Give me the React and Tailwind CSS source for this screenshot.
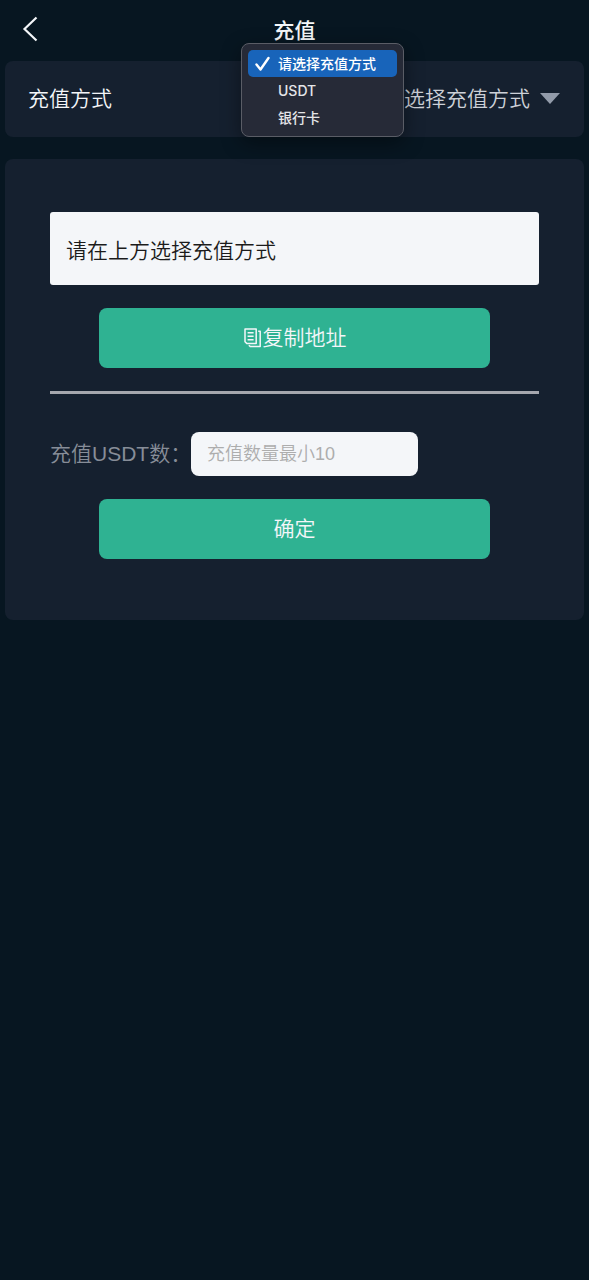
import { useState } from "react";

const METHODS = [
  { value: "", label: "请选择充值方式" },
  { value: "usdt", label: "USDT" },
  { value: "bank", label: "银行卡" },
];

export default function App() {
  const [method, setMethod] = useState("");
  const [menuOpen, setMenuOpen] = useState(true);
  const [amount, setAmount] = useState("");

  const pickMethod = (value) => {
    setMethod(value);
    setMenuOpen(false);
  };

  return (
    <div lang="zh-CN" className="min-h-screen bg-[#071621] px-[5px] font-['Liberation_Sans','Noto_Sans_CJK_SC',sans-serif] text-[21px] font-[350] text-[#f4f6f9]">
      <header className="grid h-[61px] grid-cols-[1fr_auto_1fr] items-center">
        <button type="button" aria-label="返回" className="ml-4 w-5 pb-1">
          <svg viewBox="0 0 20 26" className="h-[26px] w-5" fill="none" stroke="currentColor" strokeWidth="2.2">
            <path d="M15.5 1.5 3.5 13l12 11.5" />
          </svg>
        </button>
        <h1 className="leading-[61px] font-medium">充值</h1>
      </header>

      {/* 充值方式 */}
      <section className="relative flex h-[76px] items-center justify-between rounded-lg bg-[#15202f] pr-6 pl-[23px]">
        <label htmlFor="method">充值方式</label>
        <div className="flex items-center gap-[10px]">
          <select
            id="method"
            value={method}
            onChange={(e) => setMethod(e.target.value)}
            className="appearance-none bg-transparent text-[#cdd1d8] outline-none"
          >
            {METHODS.map((item) => (
              <option key={item.value} value={item.value}>
                {item.label}
              </option>
            ))}
          </select>
          <svg viewBox="0 0 20 11" className="mb-[2px] h-[11px] w-5 text-[#929baa]" fill="currentColor">
            <path d="M0 0h20L10 11z" />
          </svg>
        </div>

        {menuOpen && (
          <ul
            role="listbox"
            aria-label="充值方式"
            className="absolute -top-[18px] right-[180px] w-[163px] rounded-lg border border-[#5a5d66] bg-[#262a37] px-[6px] pt-[6px] pb-[5px] font-['Inter','Noto_Sans_CJK_SC',sans-serif] text-sm font-medium shadow-[0_6px_20px_rgba(0,0,0,0.4)]"
          >
            {METHODS.map((item) => {
              const selected = item.value === method;
              return (
                <li key={item.value} role="option" aria-selected={selected}>
                  <button
                    type="button"
                    onClick={() => pickMethod(item.value)}
                    className={`flex h-[27px] w-full items-center rounded-[5px] pl-[7px] ${
                      selected ? "bg-[#1864ba] text-white" : "text-[#e4e5e8]"
                    }`}
                  >
                    <span className="w-[23px]">
                      {selected && (
                        <svg viewBox="0 0 15 15" className="h-[15px] w-[15px]" fill="none" stroke="currentColor" strokeWidth="2.4" strokeLinecap="round" strokeLinejoin="round">
                          <path d="M1.5 8.5 5.5 13.5 13.5 2" />
                        </svg>
                      )}
                    </span>
                    {item.label}
                  </button>
                </li>
              );
            })}
          </ul>
        )}
      </section>

      <section className="mt-[22px] rounded-lg bg-[#15202f] px-[45px] pt-[53px] pb-[61px]">
        <p className="flex h-[73px] items-center rounded-[3px] bg-[#f4f6f9] px-4 pt-1 text-[#1b1b1b]">
          请在上方选择充值方式
        </p>

        <button
          type="button"
          className="mx-auto mt-[23px] flex h-[60px] w-4/5 items-center justify-center rounded-lg bg-[#2fb292]"
        >
          <svg viewBox="0 0 20 20" className="h-5 w-5" fill="none" stroke="currentColor" strokeWidth="1.5" strokeLinejoin="round">
            <path d="M2 1h11.2v14.6H4L2 13.8z" />
            <path d="M4.6 4.8h6M4.6 8.3h6M4.6 11.8h6" />
            <path d="M15.2 3.2h2v15.4H7.4l-1.6-1.4" />
          </svg>
          复制地址
        </button>

        <hr className="mt-[23px] border-0 border-t-[3px] border-[#a5a7ae]" />

        <div className="mt-[38px] flex items-center">
          <label htmlFor="amount" className="w-[141px] whitespace-nowrap text-[#878d98]">
            充值USDT数：
          </label>
          <input
            id="amount"
            type="text"
            inputMode="decimal"
            value={amount}
            onChange={(e) => setAmount(e.target.value)}
            placeholder="充值数量最小10"
            className="h-11 w-[227px] rounded-lg bg-[#f4f6f9] px-4 text-lg text-[#1b1b1b] outline-none placeholder:text-[#adadad]"
          />
        </div>

        <button
          type="button"
          className="mx-auto mt-[23px] flex h-[60px] w-4/5 items-center justify-center rounded-lg bg-[#2fb292]"
        >
          确定
        </button>
      </section>
    </div>
  );
}
